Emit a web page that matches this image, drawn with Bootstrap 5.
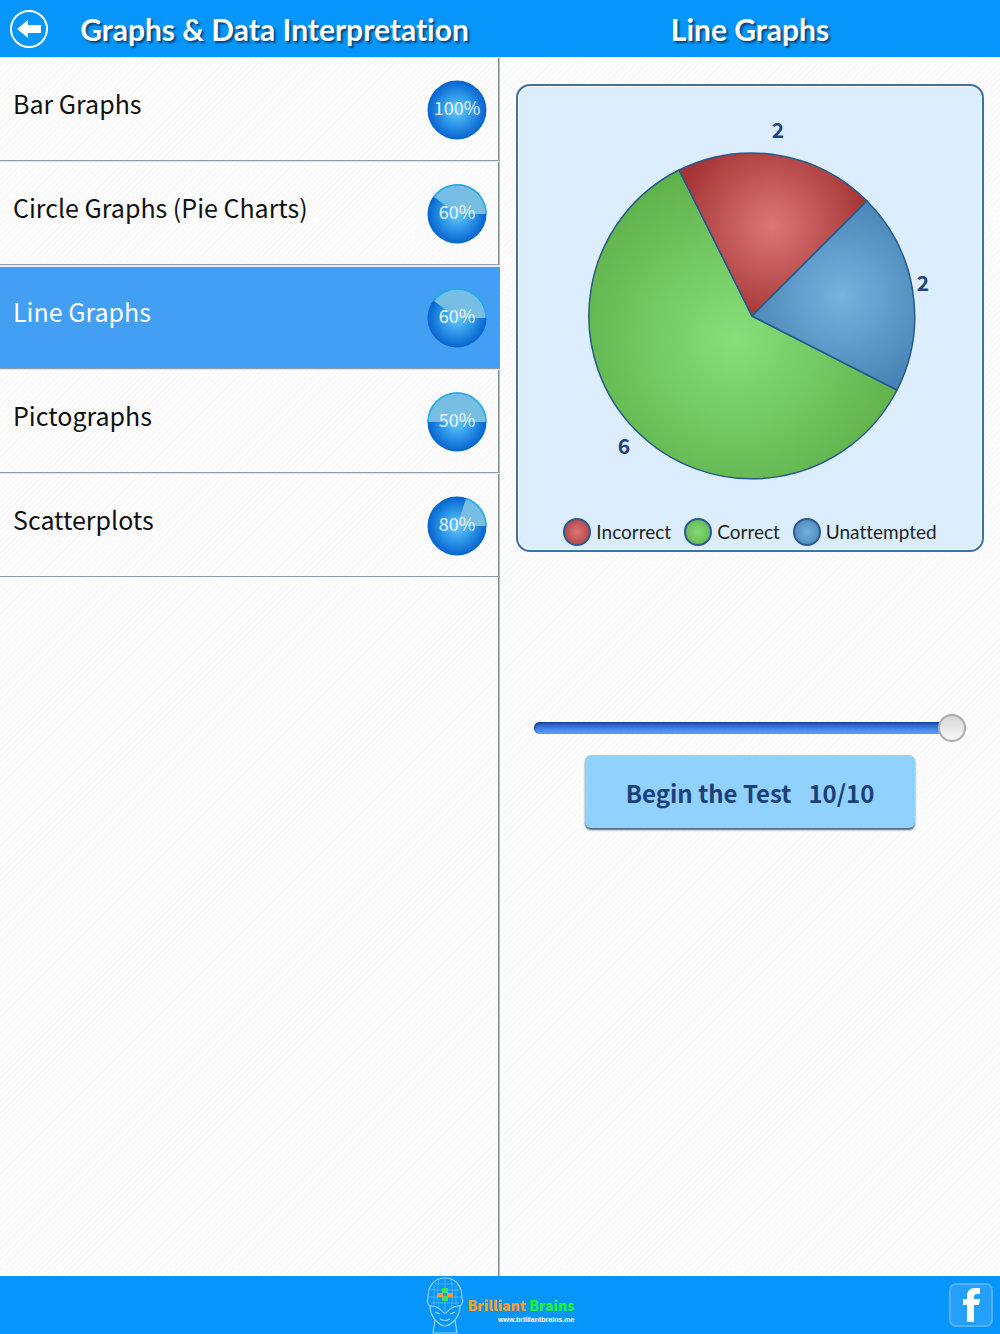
<!DOCTYPE html>
<html lang="en">
<head>
<meta charset="utf-8">
<meta name="viewport" content="width=device-width, initial-scale=1">
<title>Graphs &amp; Data Interpretation</title>
<link href="https://cdn.jsdelivr.net/npm/bootstrap@5.3.0/dist/css/bootstrap.min.css" rel="stylesheet">
<style>
  body {
    font-family: "Noto Sans CJK SC", "Noto Sans", sans-serif;
    background: repeating-linear-gradient(135deg, #fdfdfd 0 2px, #f9f9f9 2px 4px);
    font-variant-ligatures: none;
  }
  .bar-blue { background: #0595fb; }
  .topbar { height: 57px; }
  .bar-title {
    font-family: Lato, sans-serif;
    font-size: 30px;
    line-height: 40px;
    font-weight: 700;
    color: #fff;
    text-shadow: 2px 2px 2px #0b4478;
    padding-top: 1px;
  }
  .back-link { width: 40px; height: 40px; margin-left: 9px; }
  .topic-pane {
    background: linear-gradient(90deg, #7c8da0 0 1px, #b4bec9 1px 2px) right / 2px 100% no-repeat;
  }
  .topic {
    height: 104px;
    padding: 2px 13px 0;
    color: #111;
    border-bottom: 1px solid #8f9dab;
    box-shadow: inset 0 1px #e2e6ea;
  }
  .topic-name { font-size: 25px; line-height: 36px; padding-bottom: 14px; }
  .topic.active {
    color: #fff;
    background: #429ff3;
    border-top: 2px solid #e6edf4;
    padding-top: 0;
    box-shadow: none;
  }
  .score { width: 60px; height: 60px; font-size: 18px; }
  .result-pane { padding: 27px 16px 0; }
  .chart-card {
    background: #dceefd;
    border: 2px solid #3d72a2;
    border-radius: 14px;
    box-shadow: inset 0 0 0 1px #f4faff;
  }
  .pie-count { font-size: 21px; font-weight: 700; fill: #1f4382; }
  .legend-row {
    font-family: Lato, sans-serif;
    font-size: 19px;
    line-height: 28px;
    color: #1b1f24;
    gap: 13px;
    padding-bottom: 4px;
  }
  .legend-dot { width: 28px; height: 28px; border: 2px solid #2c5b94; border-radius: 50%; margin-right: 5px; }
  .dot-red { background: radial-gradient(#dc7676, #a93838); }
  .dot-green { background: radial-gradient(#84db78, #5db048); }
  .dot-blue { background: radial-gradient(#74b0dc, #4583b5); }
  .count-form { padding: 162px 18px 0; }
  .count-range { height: 28px; }
  .count-range::-webkit-slider-runnable-track {
    height: 12px;
    border-radius: 6px;
    background: linear-gradient(#1d4ba6, #2f69cd 30%, #4a8bee 65%, #5b9cf8);
    box-shadow: inset 1px 1px 1px #173f92;
  }
  .count-range::-webkit-slider-thumb {
    width: 28px;
    height: 28px;
    margin-top: -8px;
    border: 2px solid #adadad;
    background: linear-gradient(#d6d6d6, #f8f8f8);
    box-shadow: none;
  }
  .count-range::-moz-range-track { height: 12px; border-radius: 6px; background: #3a76da; }
  .begin-btn {
    width: 330px;
    height: 73px;
    margin-top: 13px;
    padding: 2px 0 0;
    gap: 17px;
    font-size: 24px;
    line-height: 32px;
    font-weight: 700;
    color: #1b4079;
    background: #90d1fe;
    border: 0;
    border-radius: 6px;
    box-shadow: 0 2px 2px #4a6379;
  }
  .begin-btn:hover { background: #a2d9ff; color: #1b4079; }
  .footbar { height: 58px; }
  .brand-name { font-size: 14px; line-height: 18px; font-weight: 900; color: #ff9c26; }
  .brand-name span { color: #1cf32b; }
  .brand-site { font-family: "Liberation Sans", sans-serif; font-size: 7px; line-height: 12px; font-weight: 700; color: #fff; }
  .fb-link { width: 44px; height: 44px; right: 7px; top: 7px; }
</style>
</head>
<body class="d-flex flex-column min-vh-100">

<header class="topbar bar-blue row g-0">
  <div class="col-6 d-flex align-items-center">
    <a href="#" class="back-link flex-shrink-0" aria-label="Back">
      <svg class="d-block" width="40" height="40" viewBox="0 0 40 40">
        <circle cx="20" cy="20" r="18" fill="none" stroke="#fff" stroke-width="2"/>
        <path d="M8 20l11-9v5h13v8H19v5z" fill="#fff"/>
      </svg>
    </a>
    <h1 class="bar-title flex-grow-1 text-center text-nowrap mb-0">Graphs &amp; Data Interpretation</h1>
  </div>
  <div class="col-6 d-flex align-items-center justify-content-center">
    <h2 class="bar-title mb-0">Line Graphs</h2>
  </div>
</header>

<svg width="0" height="0" class="position-absolute" aria-hidden="true">
  <defs>
    <radialGradient id="ball"><stop offset="0" stop-color="#68cbf8"/><stop offset=".5" stop-color="#3099ea"/><stop offset="1" stop-color="#0563cf"/></radialGradient>
  </defs>
</svg>

<main class="row g-0 flex-grow-1">
  <nav class="col-6 topic-pane" aria-label="Topics">
    <a href="#" class="topic d-flex align-items-center justify-content-between text-decoration-none">
      <span class="topic-name">Bar Graphs</span>
      <svg class="score" viewBox="0 0 60 60">
        <circle cx="30" cy="30" r="29.5" fill="url(#ball)"/>
        <text x="30" y="35" text-anchor="middle" fill="#e8f5ff">100%</text>
      </svg>
    </a>
    <a href="#" class="topic d-flex align-items-center justify-content-between text-decoration-none">
      <span class="topic-name">Circle Graphs (Pie Charts)</span>
      <svg class="score" viewBox="0 0 60 60">
        <circle cx="30" cy="30" r="29.5" fill="url(#ball)"/>
        <path d="M30 30L7 13A28.600 28.600 0 0 1 58.600 30z" fill="#78bde3"/>
        <path d="M7 13A28.600 28.600 0 0 1 59 30" fill="none" stroke="#20b0ef" stroke-width="1.500"/>
        <text x="30" y="35" text-anchor="middle" fill="#e8f5ff">60%</text>
      </svg>
    </a>
    <a href="#" class="topic active d-flex align-items-center justify-content-between text-decoration-none" aria-current="page">
      <span class="topic-name">Line Graphs</span>
      <svg class="score" viewBox="0 0 60 60">
        <circle cx="30" cy="30" r="29.5" fill="url(#ball)"/>
        <path d="M30 30L7 13A28.600 28.600 0 0 1 58.600 30z" fill="#78bde3"/>
        <path d="M7 13A28.600 28.600 0 0 1 59 30" fill="none" stroke="#20b0ef" stroke-width="1.500"/>
        <text x="30" y="35" text-anchor="middle" fill="#e8f5ff">60%</text>
      </svg>
    </a>
    <a href="#" class="topic d-flex align-items-center justify-content-between text-decoration-none">
      <span class="topic-name">Pictographs</span>
      <svg class="score" viewBox="0 0 60 60">
        <circle cx="30" cy="30" r="29.5" fill="url(#ball)"/>
        <path d="M1.400 30A28.600 28.600 0 0 1 58.600 30z" fill="#78bde3"/>
        <path d="M1 30A29 29 0 0 1 59 30" fill="none" stroke="#20b0ef" stroke-width="1.500"/>
        <text x="30" y="35" text-anchor="middle" fill="#e8f5ff">50%</text>
      </svg>
    </a>
    <a href="#" class="topic d-flex align-items-center justify-content-between text-decoration-none">
      <span class="topic-name">Scatterplots</span>
      <svg class="score" viewBox="0 0 60 60">
        <circle cx="30" cy="30" r="29.5" fill="url(#ball)"/>
        <path d="M30 30L39 2.800A28.600 28.600 0 0 1 58.600 30z" fill="#78bde3"/>
        <path d="M39 2.500A29 29 0 0 1 59 30" fill="none" stroke="#20b0ef" stroke-width="1.500"/>
        <text x="30" y="35" text-anchor="middle" fill="#e8f5ff">80%</text>
      </svg>
    </a>
  </nav>

  <section class="col-6 result-pane">
    <div class="chart-card">
      <svg class="d-block w-100" viewBox="0 0 464 432" role="img" aria-label="Test results by outcome">
        <defs>
          <radialGradient id="gRed" gradientUnits="userSpaceOnUse" cx="254" cy="140" r="98"><stop offset="0" stop-color="#dc7777"/><stop offset="1" stop-color="#a53434"/></radialGradient>
          <radialGradient id="gBlue" gradientUnits="userSpaceOnUse" cx="324" cy="210" r="105"><stop offset="0" stop-color="#77b2dd"/><stop offset="1" stop-color="#4683b3"/></radialGradient>
          <radialGradient id="gGreen" gradientUnits="userSpaceOnUse" cx="217" cy="253" r="178"><stop offset="0" stop-color="#86df7b"/><stop offset="1" stop-color="#5fb149"/></radialGradient>
        </defs>
        <g stroke="#26598e" stroke-width="1.500" stroke-linejoin="round">
          <path d="M234 230L379 304A163 163 0 1 1 161 84z" fill="url(#gGreen)"/>
          <path d="M234 230L161 84A163 163 0 0 1 349 115z" fill="url(#gRed)"/>
          <path d="M234 230L349 115A163 163 0 0 1 379 304z" fill="url(#gBlue)"/>
        </g>
        <g class="pie-count" text-anchor="middle">
          <text x="260" y="52">2</text>
          <text x="405" y="205">2</text>
          <text x="106" y="368">6</text>
        </g>
      </svg>
      <div class="legend-row d-flex justify-content-center">
        <span class="d-flex"><i class="legend-dot dot-red"></i>Incorrect</span>
        <span class="d-flex"><i class="legend-dot dot-green"></i>Correct</span>
        <span class="d-flex"><i class="legend-dot dot-blue"></i>Unattempted</span>
      </div>
    </div>

    <form class="count-form d-flex flex-column align-items-center">
      <input type="range" class="form-range count-range" min="1" max="10" value="10" aria-label="Number of questions">
      <button type="button" class="btn begin-btn d-flex align-items-center justify-content-center"><span>Begin the Test</span><span>10/10</span></button>
    </form>
  </section>
</main>

<footer class="footbar bar-blue position-relative d-flex justify-content-center">
  <a href="#" class="d-flex text-decoration-none">
    <svg class="me-1" width="38" height="58" viewBox="0 0 38 58" fill="none" stroke="#9bd3ff" stroke-width="1.200" aria-hidden="true">
      <path d="M7 57l2-13C6 40 4 35 4 30c-3-2-3-6-2-8 0-13 7-20 17-20s17 7 17 20c1 2 1 6-2 8 0 5-2 10-5 14l2 13z"/>
      <path d="M4 30c4-1 10 2 14 7h2c4-5 10-8 14-7M9 44c4 4 7 6 10 6s6-2 10-6M14 43q5 3 10 0M9 36l5 2M29 36l-5 2"/>
      <path d="M3 21h32M5 14h28M9 8h20M5 27h28M19 2v33M13 4c-2 8-2 20 0 28M25 4c2 8 2 20 0 28M8 9v19M30 9v19" stroke="#58b8fc" stroke-width=".8"/>
      <path d="M16 12h6v5h-6zM16 20h6v5h-6z" fill="#3fe35b" stroke="none"/>
      <path d="M11 17h6v4h-6zM21 17h6v4h-6z" fill="#ff9445" stroke="none"/>
    </svg>
    <span class="d-flex flex-column align-items-end pt-3 mt-1">
      <span class="brand-name">Brilliant <span>Brains</span></span>
      <span class="brand-site">www.brilliantbrains.me</span>
    </span>
  </a>
  <a href="#" class="fb-link position-absolute" aria-label="Facebook">
    <svg class="d-block" width="44" height="44" viewBox="0 0 44 44">
      <rect x="1" y="1" width="42" height="42" rx="6" fill="#259ffc" stroke="#50b2fc" stroke-width="2"/>
      <path d="M18 39V22h-4v-6h4v-3c0-5 3-8 8-8h5v6h-3c-2 0-3 1-3 3v2h6l-1 6h-5v17z" fill="#fff"/>
    </svg>
  </a>
</footer>

<script src="https://cdn.jsdelivr.net/npm/bootstrap@5.3.0/dist/js/bootstrap.bundle.min.js"></script>
</body>
</html>
